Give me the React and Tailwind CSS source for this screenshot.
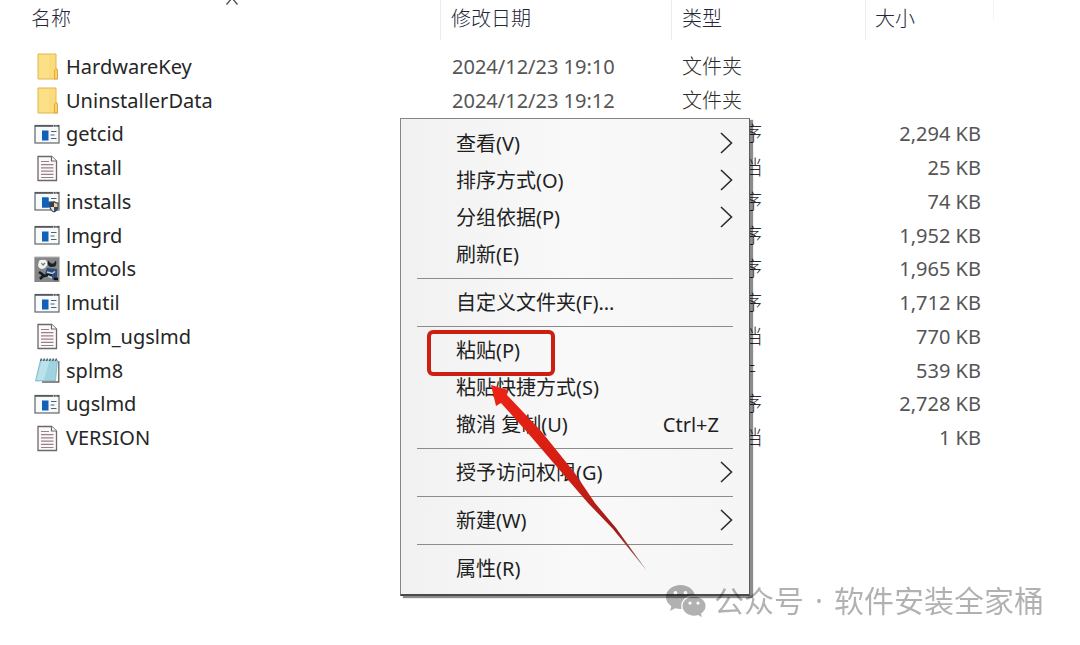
const FILES = [
  { name: 'HardwareKey', icon: 'folder', date: '2024/12/23 19:10', type: '文件夹', size: '' },
  { name: 'UninstallerData', icon: 'folder', date: '2024/12/23 19:12', type: '文件夹', size: '' },
  { name: 'getcid', icon: 'exe', date: '', type: '应用程序', size: '2,294 KB' },
  { name: 'install', icon: 'text', date: '', type: '文本文档', size: '25 KB' },
  { name: 'installs', icon: 'setup', date: '', type: '应用程序', size: '74 KB' },
  { name: 'lmgrd', icon: 'exe', date: '', type: '应用程序', size: '1,952 KB' },
  { name: 'lmtools', icon: 'tools', date: '', type: '应用程序', size: '1,965 KB' },
  { name: 'lmutil', icon: 'exe', date: '', type: '应用程序', size: '1,712 KB' },
  { name: 'splm_ugslmd', icon: 'text', date: '', type: '文本文档', size: '770 KB' },
  { name: 'splm8', icon: 'notepad', date: '', type: 'LIC 文件', size: '539 KB' },
  { name: 'ugslmd', icon: 'exe', date: '', type: '应用程序', size: '2,728 KB' },
  { name: 'VERSION', icon: 'text', date: '', type: '文本文档', size: '1 KB' },
]

// each inner list is a group, groups are split by a separator
const MENU = [
  [
    { label: '查看(V)', submenu: true },
    { label: '排序方式(O)', submenu: true },
    { label: '分组依据(P)', submenu: true },
    { label: '刷新(E)' },
  ],
  [{ label: '自定义文件夹(F)...' }],
  [
    { label: '粘贴(P)', marked: true },
    { label: '粘贴快捷方式(S)' },
    { label: '撤消 复制(U)', shortcut: 'Ctrl+Z' },
  ],
  [{ label: '授予访问权限(G)', submenu: true }],
  [{ label: '新建(W)', submenu: true }],
  [{ label: '属性(R)' }],
]

function FolderIcon() {
  return (
    <>
      <path d="M4 1h18v14.5l1.5 1V26H4z" fill="#fbdc7c" stroke="#e3b552" strokeWidth="1" />
      <path d="M5 2h10v23H5z" fill="#fde38f" opacity="0.6" />
      <path d="M20.5 26v-8.5q1.5-3.5 3 0V26z" fill="#f8d468" stroke="#d9a440" strokeWidth="0.9" />
    </>
  )
}

function WindowIcon() {
  return (
    <>
      <rect x="1" y="4.5" width="24" height="17.5" fill="#f7fafb" stroke="#63676a" strokeWidth="1.2" />
      <path d="M1 4.900h24" stroke="#55595c" strokeWidth="1.800" />
      <path d="M19 5h1M21.500 5h1" stroke="#fff" strokeWidth="1" />
      <rect x="8" y="9.5" width="6.5" height="10" fill="#1260b8" />
      <path d="M17 10.500h5.500M16.500 14h4M17 17.500h5.500" stroke="#55606a" strokeWidth="1.200" />
    </>
  )
}

function SetupIcon() {
  return (
    <>
      <WindowIcon />
      <path d="M8 9.500h6.500v4H18v6H8z" fill="#1260b8" />
      <path d="M15.500 14.500q3 0 4.500-1.500 2 1.500 4.500 1.500v4q0 4-4.500 6-4.500-2-4.500-6z" fill="#3b3f45" />
      <path d="M20 14.500q1.500 1 3.500 1.300V19H20z" fill="#f0cf94" />
      <path d="M16.500 19H20v4.500q-3-1.500-3.500-4.500z" fill="#d9e6ee" />
      <path d="M20 19h3.500q-.5 3-3.500 4.500z" fill="#35506b" />
    </>
  )
}

function TextIcon() {
  return (
    <>
      <path d="M4 1.500h13.500L22.500 6v19.500H4z" fill="#fbf8f9" stroke="#6d686a" strokeWidth="1.300" />
      <path d="M17.500 1.500V6h5" fill="#fff" stroke="#6d686a" strokeWidth="1.200" />
      <path d="M7 6.500h8M7 9.700h12.500M7 12.900h12.500M7 16.100h12.500M7 19.300h12.500M7 22.500h12.500" stroke="#9a8189" strokeWidth="1.200" />
    </>
  )
}

function NotepadIcon() {
  return (
    <>
      <path d="M8 4h17.500v21.500H8z" fill="#fff" />
      <path d="M24.800 4v21H8" fill="none" stroke="#66605c" strokeWidth="1.300" />
      <path d="M6.500 3h17l-2 20.500L1.500 24z" fill="#9fd3e0" stroke="#79b4c4" strokeWidth="0.800" />
      <path d="M7.500 4h8L10 23H2.500z" fill="#c4e8ef" opacity="0.700" />
      <path d="M6.500 4l1-2.500M9.500 4l1-2.500M12.500 4l1-2.500M15.500 4l1-2.500M18.500 4l1-2.500M21.500 4l1-2.500" stroke="#44545a" strokeWidth="1.300" />
    </>
  )
}

function ToolsIcon() {
  return (
    <>
      <rect x="0.500" y="1" width="25" height="25" fill="#858789" />
      <path d="M0.500 26V1h25" fill="none" stroke="#b3b5b7" strokeWidth="1" />
      <path d="M14 4.500q-1 6 3 6.500l4-.5q2-2 1-6l-2.500 3h-2.500z" fill="#1c2024" />
      <path d="M13 12l10 1v9l-4 2-2-4-6-2z" fill="#2d4d78" />
      <path d="M5 5q2-2 4-1 3-1 4 2 1 3-1 5-2 2-4 2-4-1-4-4z" fill="#f1f2f2" />
      <path d="M7.500 7l1.500 2 2-2" fill="none" stroke="#70757a" strokeWidth="1.200" />
      <path d="M5 16l3 2 2 2 8-2M9 20l-3 3" fill="none" stroke="#171b22" strokeWidth="2.600" />
      <path d="M13 16l5 1.500 3-2M18 22l-4-2" fill="none" stroke="#bcd1e4" strokeWidth="1.500" />
      <path d="M20 23h4" stroke="#111" strokeWidth="2.500" />
    </>
  )
}

const ICONS = {
  folder: FolderIcon,
  exe: WindowIcon,
  setup: SetupIcon,
  text: TextIcon,
  notepad: NotepadIcon,
  tools: ToolsIcon,
}

function FileIcon({ kind }) {
  const Shape = ICONS[kind]
  return (
    <svg viewBox="0 0 26 27" className="w-[26px] h-[27px] shrink-0" aria-hidden="true">
      <Shape />
    </svg>
  )
}

function HeadCell({ label, sorted, className = '' }) {
  return (
    <th className="p-0 align-top font-light text-left">
      <div className={`relative h-10 pb-0.5 flex items-center ${className}`}>
        {label}
        {sorted && (
          <svg viewBox="0 0 14 5" className="absolute top-0 left-[225px] w-[14px] h-[5px]" aria-hidden="true">
            <path d="M1.500 4.500L7-2l5.500 6.500" fill="none" stroke="#4a4a4a" strokeWidth="1.300" />
          </svg>
        )}
      </div>
    </th>
  )
}

function FileTable() {
  return (
    <table className="w-full h-[455px] table-fixed border-collapse text-[20px] leading-7 text-[#555]">
      <colgroup>
        <col className="w-[440px]" />
        <col className="w-[231px]" />
        <col className="w-[194px]" />
        <col className="w-[128px]" />
        <col />
      </colgroup>
      <thead className="text-[#242638]">
        <tr className="h-[50px]">
          <HeadCell label="名称" sorted className="pl-[31px]" />
          <HeadCell label="修改日期" className="pl-[10px] border-l border-[#ececec]" />
          <HeadCell label="类型" className="pl-[10px] border-l border-[#ececec]" />
          <HeadCell label="大小" className="pl-[9px] border-l border-[#ececec]" />
          <td className="p-0 align-top">
            <div className="h-5 border-l border-[#f4f4f4]" />
          </td>
        </tr>
      </thead>
      <tbody>
        {FILES.map((f) => (
          <tr key={f.name}>
            <td className="p-0 pl-[34px]">
              <div className="flex items-center gap-1.5 text-[#262626]">
                <FileIcon kind={f.icon} />
                <span>{f.name}</span>
              </div>
            </td>
            <td className="p-0 pl-3">{f.date}</td>
            <td className="p-0 pl-[11px] font-light whitespace-nowrap text-[#2c2c2c]">{f.type}</td>
            <td className="p-0 pr-3 text-right">{f.size}</td>
            <td className="p-0" />
          </tr>
        ))}
      </tbody>
    </table>
  )
}

function MenuItem({ item }) {
  return (
    <button
      type="button"
      role="menuitem"
      className="relative w-full h-[37px] pl-[55px] pr-4 flex items-center justify-between text-left"
    >
      <span>{item.label}</span>
      {item.shortcut && <span className="mr-[14px]">{item.shortcut}</span>}
      {item.submenu && (
        <svg viewBox="0 0 14 24" className="w-[14px] h-6" aria-hidden="true">
          <path d="M2 1l10.500 10L2 21" fill="none" stroke="#2c2c2c" strokeWidth="1.600" />
        </svg>
      )}
      {item.marked && (
        <span className="absolute left-[26px] -top-[2px] w-[128px] h-[46px] border-4 border-[#cb1f14] rounded-md" />
      )}
    </button>
  )
}

function ContextMenu() {
  return (
    <div
      role="menu"
      className="absolute left-[400px] top-[118px] w-[350px] pt-[6px] pb-[7px] border border-[#858585] border-b-2 border-r-[#5c5c5c] border-b-[#4a4a4a] bg-linear-to-r from-[#f1f1f1] via-[#f9f9f9] to-[#f5f5f5] text-[20px] leading-7 text-[#1f1f1f] shadow-[3px_2px_1px_rgba(0,0,0,0.45)]"
    >
      {MENU.map((group, i) => (
        <div key={group[0].label}>
          {i > 0 && <hr className="my-[5px] mx-4 border-t border-[#8c8c8c]" />}
          {group.map((item) => (
            <MenuItem key={item.label} item={item} />
          ))}
        </div>
      ))}
    </div>
  )
}

function Arrow() {
  return (
    <svg viewBox="0 0 160 190" className="absolute left-[490px] top-[384px] w-[160px] h-[190px] pointer-events-none" aria-hidden="true">
      <defs>
        <linearGradient id="arrow-red" x1="0" y1="0" x2="1" y2="1">
          <stop offset="0" stopColor="#ee2415" />
          <stop offset="0.500" stopColor="#d01d12" />
          <stop offset="0.800" stopColor="#9c1d19" />
          <stop offset="1" stopColor="#9a6a6a" />
        </linearGradient>
      </defs>
      <path d="M1 1L18 6L17 11L51 47L84 88L105 119L126 144L157 187L123 145L98 119L73 90L37 48L11 19L6 22z" fill="url(#arrow-red)" />
    </svg>
  )
}

function Watermark() {
  return (
    <div className="absolute left-[665px] top-[580px] flex items-center gap-[7px] opacity-30 text-black pointer-events-none">
      <svg viewBox="0 0 42 42" className="w-[42px] h-[42px]" aria-hidden="true">
        <mask id="bubble-cut">
          <rect width="42" height="42" fill="#fff" />
          <ellipse cx="29" cy="26" rx="12.800" ry="11" fill="#000" />
          <circle cx="10.500" cy="13" r="1.900" fill="#000" />
          <circle cx="20.500" cy="13" r="1.900" fill="#000" />
        </mask>
        <path
          mask="url(#bubble-cut)"
          d="M15.500 5C7.500 5 1 10.300 1 17c0 3.800 2 7 5.300 9.200L5 31l5.200-2.800c1.700.5 3.400.8 5.300.8C23.500 29 30 23.700 30 17S23.500 5 15.500 5z"
        />
        <path
          fillRule="evenodd"
          d="M29 16.500c-6.400 0-11.500 4.300-11.500 9.600s5.100 9.600 11.500 9.600c1.500 0 2.900-.2 4.200-.6L37 37.200l-1-3.500c2.800-1.800 4.600-4.500 4.600-7.600 0-5.300-5.200-9.600-11.600-9.600zM25 21.500a1.600 1.600 0 1 1 0 3.200 1.600 1.600 0 0 1 0-3.200zm8 0a1.600 1.600 0 1 1 0 3.200 1.600 1.600 0 0 1 0-3.200z"
        />
      </svg>
      <span className="flex text-[30px] leading-10 whitespace-nowrap">
        <span>公众号</span>
        <span className="w-[30px] text-center">·</span>
        <span>软件安装全家桶</span>
      </span>
    </div>
  )
}

export default function App() {
  return (
    <main className="relative min-h-screen overflow-hidden bg-white font-['Noto_Sans','Noto_Sans_CJK_SC',sans-serif]">
      <FileTable />
      <ContextMenu />
      <Arrow />
      <Watermark />
    </main>
  )
}
